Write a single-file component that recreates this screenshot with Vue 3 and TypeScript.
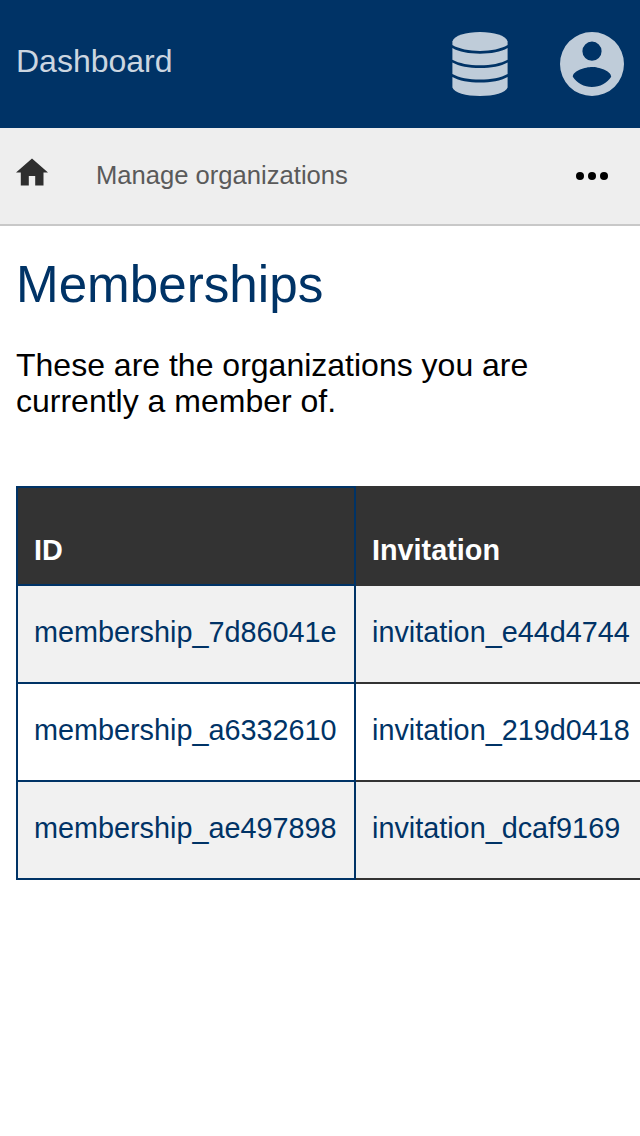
<script setup lang="ts">
interface Membership {
  id: string
  invitation: string
}

const memberships: Membership[] = [
  { id: 'membership_7d86041e', invitation: 'invitation_e44d4744' },
  { id: 'membership_a6332610', invitation: 'invitation_219d0418' },
  { id: 'membership_ae497898', invitation: 'invitation_dcaf9169' },
]
</script>

<template>
  <div class="page">
    <header class="topbar">
      <a class="brand">Dashboard</a>
      <nav class="actions">
        <svg class="db" viewBox="0 0 56 64" aria-label="Data">
          <path d="M0.4 9.5C2 3.5 14 0 28 0S54 3.5 55.6 9.5V13C49 17 39 18.9 28 18.9S7 17 0.4 13Z" />
          <path d="M0.4 16C7 20 17 21.7 28 21.7S49 20 55.6 16V27.7C49 31.4 39 33.2 28 33.2S7 31.4 0.4 27.7Z" />
          <path d="M0.4 30.5C7 34.3 17 36 28 36S49 34.3 55.6 30.5V42C49 45.8 39 47.6 28 47.6S7 45.8 0.4 42Z" />
          <path d="M0.4 44.9C7 48.7 17 50.5 28 50.5S49 48.7 55.6 44.9V55.5C54 60.5 42 64 28 64S2 60.5 0.4 55.5Z" />
        </svg>
        <svg class="user" viewBox="0 0 64 64" aria-label="Account">
          <path fill-rule="evenodd" d="M32 0a32 32 0 1 0 0 64a32 32 0 1 0 0-64zM32 9.6a9.6 9.6 0 1 1 0 19.2a9.6 9.6 0 1 1 0-19.2zM32 55.04c-8 0-15.07-4.1-19.2-10.3c.1-6.37 12.8-9.86 19.2-9.86s19.1 3.49 19.2 9.86c-4.13 6.2-11.2 10.3-19.2 10.3z" />
        </svg>
      </nav>
    </header>

    <div class="crumbs">
      <svg class="home" viewBox="0 0 32 28" aria-label="Home">
        <path d="M16 0.5L32 14.5H27.5V27.5H19.2V18H12.8V27.5H4.8V14.5H0Z" />
      </svg>
      <span class="crumb">Manage organizations</span>
      <svg class="more" viewBox="0 0 32 8" aria-label="More">
        <circle cx="4" cy="4" r="4" />
        <circle cx="16" cy="4" r="4" />
        <circle cx="28" cy="4" r="4" />
      </svg>
    </div>

    <main>
      <h1>Memberships</h1>
      <p>These are the organizations you are currently a member of.</p>
      <div class="table-wrap">
        <table>
          <thead>
            <tr>
              <th>ID</th>
              <th>Invitation</th>
            </tr>
          </thead>
          <tbody>
            <tr v-for="m in memberships" :key="m.id">
              <td>{{ m.id }}</td>
              <td>{{ m.invitation }}</td>
            </tr>
          </tbody>
        </table>
      </div>
    </main>
  </div>
</template>

<style>
body {
  margin: 0;
  background: #fff;
}
</style>

<style scoped>
.page {
  min-height: 1136px;
  overflow: hidden;
  font-family: "Liberation Sans", Arial, sans-serif;
  color: #000;
}
.topbar {
  box-sizing: border-box;
  height: 128px;
  padding: 0 16px;
  display: flex;
  align-items: center;
  justify-content: space-between;
  background: #003366;
}
.brand {
  font-size: 32px;
  line-height: 36px;
  color: #ccd6e0;
  margin-bottom: 6px;
}
.actions {
  display: flex;
  gap: 52px;
  fill: #bfccd9;
}
.db {
  width: 56px;
  height: 64px;
}
.user {
  width: 64px;
  height: 64px;
}
.crumbs {
  box-sizing: border-box;
  height: 98px;
  padding: 0 32px 0 16px;
  display: flex;
  align-items: center;
  background: #eee;
  border-bottom: 2px solid #c8c8c8;
}
.home {
  width: 32px;
  height: 28px;
  margin-bottom: 8px;
  fill: #2e2e2e;
}
.crumb {
  flex: 1;
  margin: 0 0 2px 48px;
  font-size: 25.6px;
  line-height: 30px;
  color: #5a5a5a;
}
.more {
  width: 32px;
  height: 8px;
}
main {
  padding: 30px 0 0 16px;
}
h1 {
  margin: 0;
  font-size: 51.2px;
  line-height: 58px;
  font-weight: 400;
  color: #003366;
}
p {
  width: 580px;
  margin: 33px 0 0;
  font-size: 32px;
  line-height: 36px;
}
.table-wrap {
  margin-top: 67px;
  overflow: hidden;
}
table {
  width: 720px;
  table-layout: fixed;
  border-collapse: separate;
  border-spacing: 0;
  font-size: 28.8px;
  line-height: 32px;
}
th,
td {
  box-sizing: border-box;
  padding: 0 16px;
  text-align: left;
  white-space: nowrap;
  border-bottom: 2px solid #333;
}
th {
  height: 100px;
  padding-bottom: 18px;
  vertical-align: bottom;
  color: #fff;
  background: #333;
}
td {
  height: 98px;
  padding-bottom: 4px;
  vertical-align: middle;
  color: #003366;
}
th:first-child,
td:first-child {
  width: 340px;
  border-left: 2px solid #003366;
  border-right: 2px solid #003366;
  border-bottom-color: #003366;
}
th:first-child {
  border-top: 2px solid #003366;
}
tbody tr:nth-child(odd) td {
  background: #f1f1f1;
}
</style>
